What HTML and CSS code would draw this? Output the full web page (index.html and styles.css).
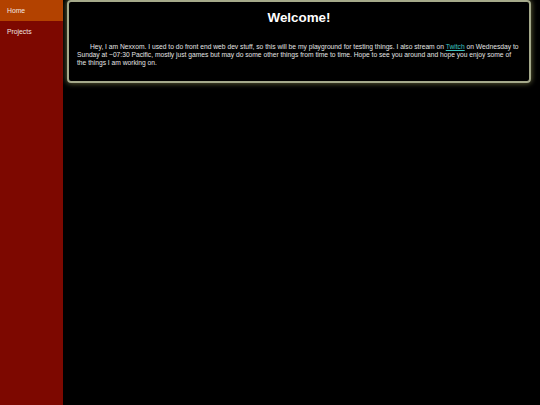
FILE: index.html
```html
<!DOCTYPE html>
<html lang="en">
<head>
<meta charset="utf-8">
<title>Nexxom</title>
<link rel="stylesheet" href="styles.css">
</head>
<body>
<div class="page">
  <nav class="sidebar">
    <a class="nav-item active" href="#">Home</a>
    <a class="nav-item" href="#">Projects</a>
  </nav>
  <main class="main">
    <section class="card">
      <h1 class="title">Welcome!</h1>
      <p class="intro">Hey, I am Nexxom. I used to do front end web dev stuff, so this will be my playground for testing things. I also stream on <a class="link" href="#">Twitch</a> on Wednesday to Sunday at ~07:30 Pacific, mostly just games but may do some other things from time to time. Hope to see you around and hope you enjoy some of the things I am working on.</p>
    </section>
  </main>
</div>
</body>
</html>
```
FILE: styles.css
```css
html, body {
  margin: 0;
  padding: 0;
  height: 100%;
  background: #000;
  font-family: "Liberation Sans", Arial, sans-serif;
}
.page {
  display: flex;
  height: 100%;
}
.sidebar {
  width: 63px;
  flex: none;
  background: #7d0800;
  display: flex;
  flex-direction: column;
}
.nav-item {
  display: block;
  height: 21px;
  line-height: 22px;
  padding-left: 7px;
  font-size: 6.8px;
  color: #f2e6e0;
  text-decoration: none;
}
.nav-item.active {
  background: #b34200;
}
.main {
  flex: 1;
  padding: 0 9px 0 4px;
}
.card {
  margin-top: 0;
  border: 2px solid #a5a98a;
  border-radius: 4px;
  box-shadow: 0 0 5px 1px rgba(150, 150, 90, 0.55);
  padding: 7px 8px 14px 8px;
  color: #e4e4e4;
}
.title {
  margin: 0 0 16px;
  text-align: center;
  font-size: 13.4px;
  line-height: 18px;
  font-weight: bold;
  color: #fff;
}
.intro {
  margin: 0;
  font-size: 6.7px;
  line-height: 8px;
  text-indent: 13px;
}
.link {
  color: #3cc4c0;
}
```
